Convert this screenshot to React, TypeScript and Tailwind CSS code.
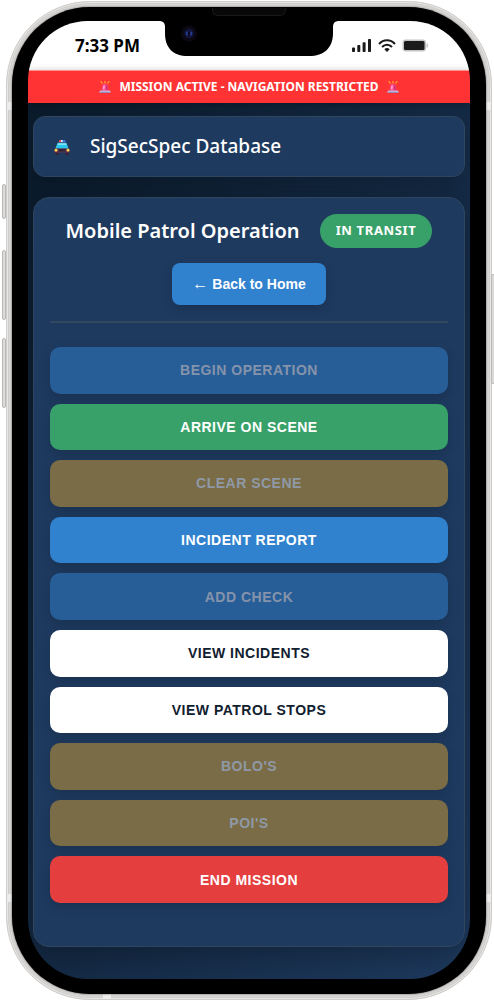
import React from "react";

type Variant = "primary" | "success" | "warning" | "light" | "danger";

interface Action {
  label: string;
  variant: Variant;
  disabled?: boolean;
}

const actions: Action[] = [
  { label: "BEGIN OPERATION", variant: "primary", disabled: true },
  { label: "ARRIVE ON SCENE", variant: "success" },
  { label: "CLEAR SCENE", variant: "warning", disabled: true },
  { label: "INCIDENT REPORT", variant: "primary" },
  { label: "ADD CHECK", variant: "primary", disabled: true },
  { label: "VIEW INCIDENTS", variant: "light" },
  { label: "VIEW PATROL STOPS", variant: "light" },
  { label: "BOLO'S", variant: "warning", disabled: true },
  { label: "POI'S", variant: "warning", disabled: true },
  { label: "END MISSION", variant: "danger" },
];

const variants: Record<Variant, string> = {
  primary: "bg-[#3182ce] text-white disabled:bg-[#285e97] disabled:text-[#8593ab]",
  success: "bg-[#38a169] text-white",
  warning: "bg-[#d69e2e] text-white disabled:bg-[#7a6c47] disabled:text-[#8f99a6]",
  light: "bg-white text-[#10202f]",
  danger: "bg-[#e53e3e] text-white",
};

function Siren() {
  return (
    <svg viewBox="0 0 24 24" className="size-3" aria-hidden="true">
      <path d="M12 0v4M4 1l2.500 3.500M20 1l-2.500 3.500" stroke="#ffb02e" strokeWidth="2.4" strokeLinecap="round" />
      <path d="M5 20l1.400-10.500C6.800 6.800 9 6 12 6s5.200.8 5.600 3.500L19 20z" fill="#f8428c" />
      <path d="M8.500 9h3.500l-.8 8H7.600z" fill="#ff9cc8" />
      <path d="M14 7l2.500 2.500L18 19h-4z" fill="#d8306f" />
      <path d="M1 24v-2.500c0-1.500 1-2.500 2.500-2.500h17c1.500 0 2.500 1 2.500 2.500V24z" fill="#c3b3d2" />
      <path d="M2 22h20v1.500H2z" fill="#8f7cac" />
    </svg>
  );
}

function PatrolCar() {
  return (
    <svg viewBox="0 0 32 32" className="size-4" aria-hidden="true">
      <rect x="10" y="2" width="6" height="5" rx="1.500" fill="#f04a5b" />
      <rect x="14" y="2" width="4" height="5" fill="#e9f2fa" />
      <rect x="17" y="2" width="6" height="5" rx="1.500" fill="#3578e5" />
      <path d="M8 6h16l6 14H2z" fill="#47637b" />
      <path d="M7 8.500h18l4 10.500H3z" fill="#2bc8ee" />
      <path d="M8 8.500h16l1 3.500H7z" fill="#79e3f7" />
      <rect x="3" y="26" width="6" height="6" rx="1.500" fill="#3d1f36" />
      <rect x="23" y="26" width="6" height="6" rx="1.500" fill="#3d1f36" />
      <path d="M3 19h26l3 3v5H0v-5z" fill="#633550" />
      <path d="M9 20h14v5H9z" fill="#2d2539" />
      <circle cx="4" cy="22.500" r="2.800" fill="#ffd44a" />
      <circle cx="28" cy="22.500" r="2.800" fill="#ffd44a" />
    </svg>
  );
}

function Signal() {
  return (
    <svg viewBox="0 0 20 13" className="h-[13px] w-5" fill="#1b1b1b" aria-hidden="true">
      <rect x="0" y="8.500" width="3" height="4.500" rx="0.800" />
      <rect x="5.300" y="6" width="3" height="7" rx="0.800" />
      <rect x="10.600" y="3.200" width="3" height="9.800" rx="0.800" />
      <rect x="16" y="0" width="3" height="13" rx="0.800" />
    </svg>
  );
}

function Wifi() {
  return (
    <svg viewBox="0 0 18 13" className="h-[13px] w-[18px]" fill="none" stroke="#1b1b1b" strokeWidth="2" aria-hidden="true">
      <path d="M1 5C5.500.1 12.500.1 17 5" />
      <path d="M4 8c2.900-3.100 7.100-3.100 10 0" />
      <path d="M6.300 10.200C8 8.700 10 8.700 11.700 10.200L9 12.900z" fill="#1b1b1b" stroke="none" />
    </svg>
  );
}

function Battery() {
  return (
    <svg viewBox="0 0 27 13" className="h-[13px] w-[27px]" aria-hidden="true">
      <rect x="0.500" y="0.500" width="23.500" height="12" rx="3.200" fill="#c4c4c4" />
      <rect x="2" y="2" width="20.500" height="9" rx="1.500" fill="#1b1b1b" />
      <path d="M24.500 4c2.200.6 2.200 4.400 0 5z" fill="#c4c4c4" />
    </svg>
  );
}

function Notch() {
  return (
    <div className="absolute top-0 left-1/2 -translate-x-1/2" aria-hidden="true">
      <svg viewBox="0 0 180 36" className="h-9 w-[180px]">
        <path d="M0 0H180C176 0 174 2 174 6V12C174 27 165 35 150 35H29C14 35 6 27 6 12V6C6 2 4 0 0 0Z" fill="#000" />
        <circle cx="30" cy="12.500" r="8" fill="#0b0811" />
        <circle cx="30" cy="12.500" r="4.800" fill="#11153c" />
        <ellipse cx="28" cy="12.500" rx="1.200" ry="2" fill="#293a91" />
        <ellipse cx="32" cy="12.500" rx="1.200" ry="2" fill="#293a91" />
        <circle cx="30" cy="12.500" r="1.300" fill="#05050d" />
      </svg>
    </div>
  );
}

function ActionButton({ label, variant, disabled }: Action) {
  return (
    <button
      type="button"
      disabled={disabled}
      className={`rounded-[10px] text-sm font-bold tracking-[0.5px] shadow-[0_4px_12px_rgba(0,0,0,0.15)] ${variants[variant]}`}
    >
      {label}
    </button>
  );
}

const sideKey = "absolute w-1 rounded-sm border border-[#bab8b7] bg-[#dddbda]";
const band = "absolute bg-[#eeedec]";

export default function App() {
  return (
    <div className="min-h-screen bg-white pt-px pr-[2px] pb-px pl-[6px] font-['Liberation_Sans',Arial,sans-serif]">
      <div className="relative rounded-[84px] border border-[#cfcdcb] bg-[#d9d7d5] p-[5px] shadow-[inset_0_0_0_1px_#e9e8e6,inset_0_0_0_2px_#d0cecc]">
        <span className={`${sideKey} top-[182px] -left-[5px] h-[35px]`} />
        <span className={`${sideKey} top-[248px] -left-[5px] h-[70px]`} />
        <span className={`${sideKey} top-[336px] -left-[5px] h-[70px]`} />
        <span className={`${sideKey} top-[272px] -right-[4px] h-[110px]`} />
        <span className={`${band} top-[100px] left-0 h-2 w-[5px]`} />
        <span className={`${band} top-[892px] left-0 h-2 w-[5px]`} />
        <span className={`${band} top-[100px] right-0 h-2 w-[5px]`} />
        <span className={`${band} top-[892px] right-0 h-2 w-[5px]`} />
        <span className={`${band} bottom-0 left-24 h-[5px] w-2`} />

        <div className="relative rounded-[78px] bg-black px-4 pt-[14px] pb-[15px] shadow-[0_0_2px_0_#444]">
          <span className="absolute top-px left-1/2 h-2 w-[74px] -translate-x-1/2 rounded-b-md border border-t-0 border-[#191919] bg-[#080808]" />
          <div className="relative overflow-hidden rounded-[60px] bg-linear-to-br from-[#0a1a2a] to-[#1e3a5f]">
            <header className="relative flex h-[49px] items-center justify-between bg-white pr-[41px] pl-[47px]">
              <time className="font-['Noto_Sans',sans-serif] text-[17px] font-bold text-black">7:33 PM</time>
              <div className="flex items-center gap-[6px]">
                <Signal />
                <Wifi />
                <Battery />
              </div>
              <Notch />
            </header>

            <div
              role="status"
              className="relative z-10 flex h-[33px] items-center justify-center gap-2 border-t border-[#ff8f8f] bg-[#ff3333] font-['Noto_Sans',sans-serif] text-xs font-bold text-white shadow-[0_2px_8px_rgba(0,0,0,0.3)]"
            >
              <Siren />
              <span>MISSION ACTIVE - NAVIGATION RESTRICTED</span>
              <Siren />
            </div>

            <main className="flex flex-col gap-5 px-[5px] pt-[13px] pb-8">
              <div className="flex h-[61px] items-center gap-5 rounded-xl border border-[#30465f] bg-[#1e3a5f] px-5 shadow-[0_8px_24px_rgba(0,0,0,0.2)]">
                <PatrolCar />
                <span className="font-['Noto_Sans',sans-serif] text-[19px] font-medium text-white">SigSecSpec Database</span>
              </div>

              <section className="rounded-2xl border border-[#30465f] bg-[#1e3a5f] px-4 pt-4 pb-[43px] shadow-[0_8px_32px_rgba(0,0,0,0.3)]">
                <div className="flex flex-col items-center gap-[15px] border-b-2 border-[#34475f] pb-4">
                  <div className="flex items-center gap-5">
                    <h1 className="font-['Noto_Sans',sans-serif] text-xl font-semibold text-white">
                      Mobile Patrol Operation
                    </h1>
                    <span className="flex h-[34px] items-center rounded-full bg-[#38a169] px-4 font-['Noto_Sans',sans-serif] text-[13px] font-bold tracking-wider text-white">
                      IN TRANSIT
                    </span>
                  </div>
                  <a
                    href="#home"
                    className="flex h-[42px] items-center gap-1 rounded-lg bg-[#3182ce] px-5 text-sm font-bold text-white shadow-[0_4px_12px_rgba(0,0,0,0.15)]"
                  >
                    <span className="font-['Liberation_Serif',serif] text-base leading-none font-normal">←</span>
                    Back to Home
                  </a>
                </div>

                <div className="mt-6 grid h-[556px] auto-rows-fr gap-[10px]">
                  {actions.map((action) => (
                    <ActionButton key={action.label} {...action} />
                  ))}
                </div>
              </section>
            </main>
          </div>
        </div>
      </div>
    </div>
  );
}
